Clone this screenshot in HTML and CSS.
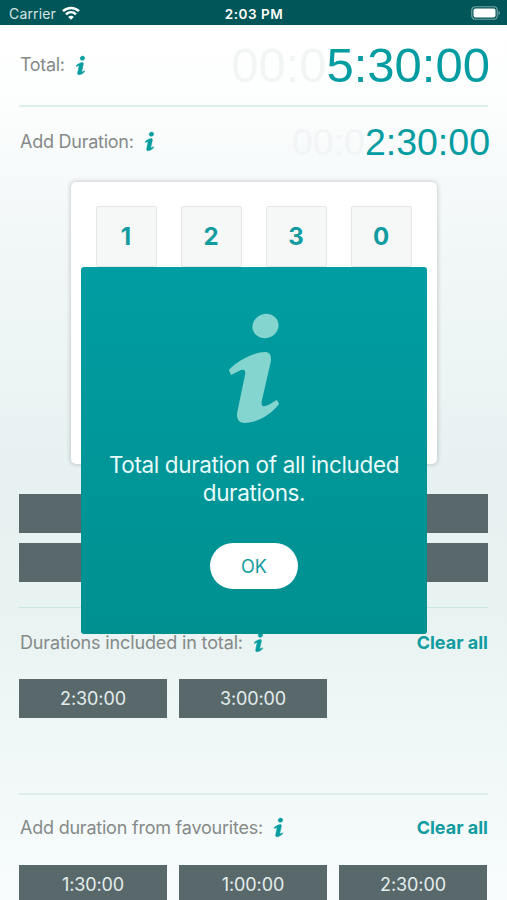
FILE: index.html
```html
<!DOCTYPE html>
<html lang="en">
<head>
<meta charset="utf-8">
<meta name="viewport" content="width=device-width, initial-scale=1">
<title>Duration Calculator</title>
<link rel="stylesheet" href="styles.css">
</head>
<body>
<svg class="defs" width="0" height="0" aria-hidden="true">
  <symbol id="info" viewBox="0 0 52 112" overflow="visible">
    <ellipse cx="37.5" cy="13" rx="13.2" ry="12" transform="rotate(-20 37.5 13)"/>
    <path d="M0.8 57 C10 47 27 39 37 39 C42 39 44 43 42.500 50 L34 87 C33 92 34 94 37 93 C42 92 46 88 49 87 L51 91 C43 102 28 110 17 110 C10 110 8 105 9.500 98 L17 62 C18 57 16 56 13 57 L3 62 Z"/>
  </symbol>
</svg>
<header class="status">
  <div class="carrier"><span>Carrier</span>
    <svg class="wifi" viewBox="0 0 18 14" fill="none" stroke="#fff" stroke-width="2.500"><path d="M1 5.200C5.500.8 12.500.8 17 5.200M4 8.300c2.900-2.800 7.100-2.800 10 0"/><path d="M9 13.800l-2.800-2.900c1.600-1.500 4-1.500 5.600 0z" fill="#fff" stroke="none"/></svg>
  </div>
  <div class="clock">2:03 PM</div>
  <svg class="battery" viewBox="0 0 30 14"><rect x=".75" y=".75" width="25.500" height="12.500" rx="3.500" fill="none" stroke="#76a3a3" stroke-width="1.200"/><rect x="2.500" y="2.500" width="22" height="9" rx="2" fill="#fff"/><path d="M27.500 5v4c2-.8 2-3.200 0-4z" fill="#76a3a3"/></svg>
</header>
<main class="screen">
  <section class="row row-total">
    <h2 class="label"><span class="t-total">Total:</span><svg class="i"><use href="#info"/></svg></h2>
    <div class="time time-lg"><span class="ghost">00:0</span>5:30:00</div>
  </section>
  <section class="row row-add">
    <h2 class="label"><span class="t-add">Add Duration:</span><svg class="i"><use href="#info"/></svg></h2>
    <div class="time time-md"><span class="ghost">00:0</span>2:30:00</div>
  </section>
  <section class="pad">
    <button class="key">1</button><button class="key">2</button><button class="key">3</button><button class="key">0</button>
  </section>
  <div class="actions"><div class="bar"></div><div class="bar"></div></div>
  <section class="group included">
    <div class="head">
      <h2 class="label"><span class="t-inc">Durations included in total:</span><svg class="i"><use href="#info"/></svg></h2>
      <a class="clear">Clear all</a>
    </div>
    <div class="chips"><button class="chip">2:30:00</button><button class="chip">3:00:00</button></div>
  </section>
  <section class="group favourites">
    <div class="head">
      <h2 class="label"><span class="t-fav">Add duration from favourites:</span><svg class="i"><use href="#info"/></svg></h2>
      <a class="clear">Clear all</a>
    </div>
    <div class="chips"><button class="chip">1:30:00</button><button class="chip">1:00:00</button><button class="chip">2:30:00</button></div>
  </section>
</main>
<div class="modal" role="dialog">
  <svg class="modal-icon"><use href="#info"/></svg>
  <p class="message">Total duration of all included durations.</p>
  <button class="ok">OK</button>
</div>
</body>
</html>
```
FILE: styles.css
```css
* { box-sizing: border-box; }
html, body { margin: 0; height: 900px; overflow: hidden; }
body {
  position: relative;
  width: 507px;
  font-family: Inter, "Liberation Sans", sans-serif;
  background: linear-gradient(#fff 25px, #fdfefe 90px, #f3f8f8 220px, #e7f1f1 480px, #e9f3f2 620px, #f1f8f8 760px, #f8fcfc 900px);
}
button { border: 0; padding: 0; font: inherit; }
h2, p { margin: 0; font-weight: 400; }
.defs { position: absolute; }

.status {
  display: grid;
  grid-template-columns: 1fr auto 1fr;
  align-items: center;
  height: 25px;
  padding: 2px 6px 0 9px;
  color: #fff;
  background: #005658;
}
.carrier { display: flex; align-items: center; gap: 6px; font-size: 14px; color: #d5e5e5; letter-spacing: .15px; }
.wifi { width: 18px; height: 14px; margin-top: -2px; }
.clock { position: relative; left: -1px; font-size: 13.500px; font-weight: 600; letter-spacing: .5px; }
.battery { width: 30px; height: 14px; margin-top: -2px; justify-self: end; }

.screen { padding: 0 19px; }
.row { display: flex; align-items: center; justify-content: space-between; }
.row-total { height: 82px; border-bottom: 2px solid #dcefed; }
.row-add { height: 74px; padding-bottom: 3px; }
.label { display: flex; align-items: center; padding-left: 1px; font-size: 18px; line-height: 22px; color: #858a89; white-space: nowrap; }
.label .i { width: 9px; height: 19px; margin-left: 11px; fill: #069da0; stroke: #069da0; stroke-width: 3px; overflow: visible; }
.row-total .i { margin-top: 1px; }
.row-add .label { margin-top: -2px; }
.t-total { letter-spacing: -.35px; }
.t-add { letter-spacing: -.25px; }
.t-inc { letter-spacing: -.14px; }
.t-fav { letter-spacing: -.22px; }
.time { font-family: "Liberation Sans", Arial, sans-serif; color: #039ca1; line-height: 1; white-space: nowrap; }
.time-lg { font-size: 49px; margin-right: -2px; }
.time-md { font-size: 37.500px; margin-right: -2px; }
.ghost { color: #f2f5f5; }

.pad {
  display: flex;
  justify-content: center;
  gap: 24px;
  width: 366px;
  height: 282px;
  margin: 1px auto 0;
  padding-top: 24px;
  background: #fff;
  border-radius: 5px;
  box-shadow: 0 0 4px 1px rgba(0, 0, 0, .17);
}
.key { width: 61px; height: 61px; font-size: 24px; font-weight: 700; color: #109ca0; background: #f6f7f7; border: 1px solid #e5e7e7; border-radius: 2px; }
.actions { display: grid; gap: 10px; padding-top: 30.400px; }
.bar { height: 39px; background: #59696b; }

.group { padding-top: 21px; }
.included { height: 185.600px; margin-top: 25px; border-top: 1px solid #c9e8e4; }
.included .label { margin-top: 1px; }
.favourites { padding-top: 20px; border-top: 2px solid #dcefed; }
.head { display: flex; align-items: center; justify-content: space-between; height: 26px; }
.clear { font-size: 18px; font-weight: 700; letter-spacing: 0; color: #109ca0; }
.chips { display: grid; grid-template-columns: repeat(3, 148px); gap: 12px; margin-top: 23.600px; }
.chip { height: 39px; font-size: 18px; color: #e5eded; background: #59696b; letter-spacing: -.1px; }

.modal {
  position: absolute;
  left: 81px;
  top: 267px;
  width: 346px;
  height: 367px;
  display: flex;
  flex-direction: column;
  align-items: center;
  padding-top: 46px;
  border-radius: 3px;
  background: linear-gradient(#009da2, #009090);
}
.modal-icon { width: 52px; height: 112px; fill: #84d4cf; }
.message { width: 310px; margin-top: 26px; font-size: 22.500px; line-height: 28px; text-align: center; color: #e8fafa; letter-spacing: -.37px; }
.ok { width: 88px; height: 46px; margin-top: 36px; border-radius: 23px; font-size: 18px; color: #109ca0; background: #fff; }
```
